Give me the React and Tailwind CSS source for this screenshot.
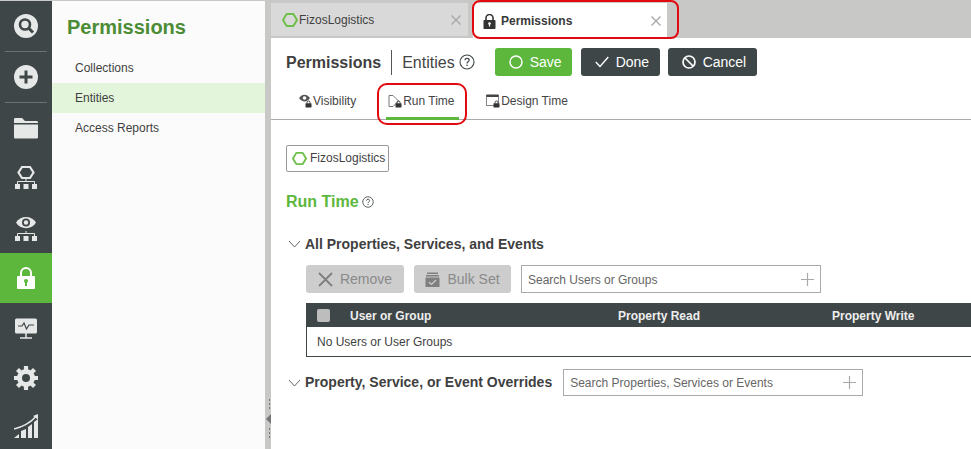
import React from 'react';

const Hex = ({ size = 16 }) => (
  <svg width={size} height={size} viewBox="0 0 16 16" fill="none" className="shrink-0">
    <path d="M4.600 2h6.800L15 8l-3.600 6H4.600L1 8z" stroke="#6cc04a" strokeWidth="2" strokeLinejoin="round" />
  </svg>
);

const Help = ({ size = 16 }) => (
  <svg width={size} height={size} viewBox="0 0 16 16" fill="none" className="shrink-0">
    <circle cx="8" cy="8" r="7" stroke="#3e4648" strokeWidth="1.100" />
    <path d="M5.900 6.200C6 5 6.900 4.300 8.100 4.300c1.200 0 2.100.7 2.100 1.800 0 1.700-2.200 1.600-2.200 3.400" stroke="#3e4648" strokeWidth="1.200" />
    <rect x="7.400" y="10.600" width="1.300" height="1.400" fill="#3e4648" />
  </svg>
);

const Chevron = () => (
  <svg width="13" height="8" viewBox="0 0 13 8" fill="none" className="shrink-0">
    <path d="M1 1l5.500 6L12 1" stroke="#555" strokeWidth="0.900" />
  </svg>
);

const Plus = () => (
  <svg width="13" height="13" viewBox="0 0 13 13" className="shrink-0">
    <path d="M6.500 0v13M0 6.500h13" stroke="#a9a9a9" strokeWidth="1.200" />
  </svg>
);

const Close = () => (
  <svg width="10" height="10" viewBox="0 0 10 10" className="shrink-0">
    <path d="M.5.500l9 9M9.500.500l-9 9" stroke="#a5a5a5" strokeWidth="1.200" />
  </svg>
);

// small padlock that sits on the sub tab icons
const TabLock = ({ x, y }) => (
  <g transform={`translate(${x} ${y})`}>
    <path d="M1.500 3V2a1.500 1.500 0 013 0v1" fill="none" stroke="#333" strokeWidth="0.900" />
    <rect x="0" y="2.800" width="6" height="4.200" rx="0.400" fill="#333" />
  </g>
);

const railIcon = '#e6e8e8';
const rail = '#3e4648';

const RailSlot = ({ active, divider, h = 'h-[50px]', extra = '', children }) => (
  <div className={`${h} ${extra} flex items-center justify-center relative shrink-0 ${active ? 'bg-[#5cb73c]' : ''}`}>
    {children}
    {divider && <div className="absolute bottom-0 left-[5px] right-[5px] h-px bg-[#6b7274]" />}
  </div>
);

const TreeBase = ({ y = 0 }) => (
  <g transform={`translate(0 ${y})`}>
    <path d="M12 15v2.500M3.500 20v-2.500h17V20" stroke={railIcon} strokeWidth="1" fill="none" />
    <rect x="1" y="20" width="5" height="5" fill={railIcon} />
    <rect x="9.500" y="20" width="5" height="5" fill={railIcon} />
    <rect x="18" y="20" width="5" height="5" fill={railIcon} />
  </g>
);

const Rail = () => (
  <div className="w-[52px] shrink-0 flex flex-col bg-[#3e4648] border-t border-[#c8c8c7]">
    <RailSlot divider h="h-[51px]" extra="pb-[1px]">
      <svg width="24" height="24" viewBox="0 0 24 24">
        <circle cx="12" cy="12" r="12" fill={railIcon} />
        <circle cx="11" cy="10.500" r="5" fill="none" stroke={rail} strokeWidth="2.600" />
        <path d="M14.500 14l4.500 4.500" stroke={rail} strokeWidth="3" />
      </svg>
    </RailSlot>
    <RailSlot divider h="h-[51px]" extra="pb-[2px]">
      <svg width="24" height="24" viewBox="0 0 24 24">
        <circle cx="12" cy="12" r="12" fill={railIcon} />
        <path d="M12 5.500v13M5.500 12h13" stroke={rail} strokeWidth="3" />
      </svg>
    </RailSlot>
    <RailSlot>
      <svg width="24" height="22" viewBox="0 0 24 22">
        <path d="M0 2.500C0 1.400.6 1 1.500 1h6.500l3 3h11.500c.9 0 1.500.5 1.500 1.500V6H0z" fill={railIcon} />
        <path d="M0 7.500h24V20c0 1-.6 1.500-1.500 1.500h-21C.6 21.500 0 21 0 20z" fill={railIcon} />
      </svg>
    </RailSlot>
    <RailSlot>
      <svg width="24" height="26" viewBox="0 0 24 26">
        <path d="M8 2h8l3.500 5.500L16 13H8L4.500 7.500z" fill="none" stroke={railIcon} strokeWidth="2.200" />
        <TreeBase y={-1} />
      </svg>
    </RailSlot>
    <RailSlot>
      <svg width="24" height="26" viewBox="0 0 24 26">
        <path d="M2 7.500c4-7.500 16-7.500 20 0-4 7.500-16 7.500-20 0z" fill={railIcon} />
        <circle cx="12" cy="7.500" r="4" fill={rail} />
        <circle cx="12" cy="7.500" r="2.200" fill={railIcon} />
        <TreeBase y={1} />
      </svg>
    </RailSlot>
    <RailSlot active>
      <svg width="18" height="22" viewBox="0 0 18 22">
        <path d="M4 10V6a5 5 0 0110 0v4" fill="none" stroke="#fff" strokeWidth="2" />
        <rect x="0" y="9" width="18" height="13" rx="1" fill="#fff" />
        <circle cx="9" cy="14" r="2" fill="#5cb73c" />
        <rect x="8" y="14" width="2" height="5" fill="#5cb73c" />
      </svg>
    </RailSlot>
    <RailSlot>
      <svg width="22" height="22" viewBox="0 0 22 22">
        <rect x="0" y="1.500" width="22" height="15" rx="1.500" fill={railIcon} />
        <path d="M3 9h4l2-3 2.500 6L14 8h5" fill="none" stroke={rail} strokeWidth="1.200" />
        <path d="M11 16v4.500M5 21h12" stroke={railIcon} strokeWidth="1.500" />
      </svg>
    </RailSlot>
    <RailSlot>
      <svg width="24" height="24" viewBox="0 0 24 24">
        <circle cx="12" cy="12" r="6.500" fill="none" stroke={railIcon} strokeWidth="5" />
        <g stroke={railIcon} strokeWidth="4.200">
          <path d="M12 0v4M12 20v4M0 12h4M20 12h4M3.500 3.500l2.800 2.800M17.700 17.700l2.800 2.800M20.500 3.500l-2.800 2.800M6.300 17.700l-2.800 2.800" />
        </g>
      </svg>
    </RailSlot>
    <RailSlot h="flex-1">
      <svg width="24" height="24" viewBox="0 0 24 24">
        <path d="M0 15C8 13 15 10 21.500 3" fill="none" stroke={railIcon} strokeWidth="1.500" />
        <path d="M19 2l5-2v5.500z" fill={railIcon} />
        <path d="M0 24l5-4v4zM7 24v-7l5-2v9zM14 24V13l4-3v14zM20 24V8l4-3v19z" fill={railIcon} />
      </svg>
    </RailSlot>
  </div>
);

const NavPanel = () => (
  <div className="w-[213px] shrink-0 bg-[#fbfbfb] border-t border-[#c8c8c7]">
    <h1 className="h-[52px] pl-[15px] pt-[13px] text-[20px] leading-[26px] font-bold text-[#4c8c35]">Permissions</h1>
    {['Collections', 'Entities', 'Access Reports'].map((item) => (
      <div
        key={item}
        className={`h-[30px] pl-[23px] flex items-center text-[12px] text-[#3f3f3f] ${item === 'Entities' ? 'bg-[#e3f6dc]' : ''}`}
      >
        {item}
      </div>
    ))}
  </div>
);

const Splitter = () => (
  <div className="w-[6px] shrink-0 bg-[#c8c8c7] flex flex-col justify-end items-end pb-[9px] gap-[3px]">
    <div className="w-[3px] h-[13px] bg-[radial-gradient(circle,#777_1px,transparent_1px)] bg-[length:3px_4px]" />
    <div className="w-0 h-0 border-y-[5px] border-y-transparent border-r-[5px] border-r-[#777]" />
    <div className="w-[3px] h-[13px] bg-[radial-gradient(circle,#777_1px,transparent_1px)] bg-[length:3px_4px]" />
  </div>
);

const TabBar = () => (
  <div className="h-[38px] bg-[#c8c8c7] flex items-end gap-[5px] relative shrink-0">
    <div className="w-[197px] h-[33px] mb-[2px] bg-[#d9d9d9] flex items-center pl-[11px] pr-[7px] text-[12px] text-[#3f3f3f]">
      <Hex />
      <span className="ml-[1px] flex-1">FizosLogistics</span>
      <Close />
    </div>
    <div className="w-[194px] h-[35px] pt-px bg-white flex items-center pl-[10px] pr-[6px] text-[12px] font-bold text-[#3a3a3a]">
      <svg width="13" height="15" viewBox="0 0 13 15" className="shrink-0">
        <path d="M3 7V4a3.500 3.500 0 017 0v3" fill="none" stroke="#333" strokeWidth="1.600" />
        <rect x="0.500" y="6" width="12" height="9" rx="0.800" fill="#333" />
        <circle cx="6.500" cy="9.500" r="1.300" fill="#fff" />
        <rect x="5.900" y="9.500" width="1.200" height="3" fill="#fff" />
      </svg>
      <span className="ml-[5px] flex-1">Permissions</span>
      <Close />
    </div>
    <div className="absolute left-[201px] top-0 w-[207px] h-[39px] rounded-[8px] border-2 border-[#e2090f]" />
  </div>
);

const Button = ({ color, icon, label, width }) => (
  <button className={`${width} ${color} h-[28px] pl-[14px] rounded-[3px] flex items-center gap-[7px] text-[14px] text-white shrink-0`}>
    {icon}
    {label}
  </button>
);

const Header = () => (
  <div className="h-[38px] mt-[10px] pl-[15px] flex items-start shrink-0">
    <div className="h-[28px] pt-px flex items-center text-[16px] font-bold text-[#3f3f3f]">Permissions</div>
    <div className="w-px h-[25px] bg-[#555] ml-[10px] mt-[2px]" />
    <div className="h-[28px] pt-px ml-[10px] flex items-center text-[16px] text-[#444]">Entities</div>
    <div className="h-[28px] ml-[4px] flex items-center"><Help /></div>
    <div className="ml-[20px] flex gap-[9px]">
      <Button
        width="w-[77px]"
        color="bg-[#5cb73c]"
        label="Save"
        icon={<svg width="14" height="14" viewBox="0 0 14 14" fill="none"><circle cx="7" cy="7" r="6" stroke="#fff" strokeWidth="1.500" /></svg>}
      />
      <Button
        width="w-[79px]"
        color="bg-[#3e4648]"
        label="Done"
        icon={<svg width="14" height="12" viewBox="0 0 14 12" fill="none"><path d="M.8 6l4.200 4.500L13.300 1" stroke="#fff" strokeWidth="1.400" /></svg>}
      />
      <div className="-ml-px">
        <Button
          width="w-[89px]"
          color="bg-[#3e4648]"
          label="Cancel"
          icon={<svg width="14" height="14" viewBox="0 0 14 14" fill="none"><circle cx="7" cy="7" r="6" stroke="#fff" strokeWidth="1.700" /><path d="M3 3l8 8" stroke="#fff" strokeWidth="1.700" /></svg>}
        />
      </div>
    </div>
  </div>
);

const SubTabs = () => (
  <div className="h-[33px] border-b border-[#aaa] flex relative shrink-0 text-[12px] text-[#444] box-content">
    <div className="ml-[28px] h-[29px] flex items-center gap-px">
      <svg width="13" height="14" viewBox="0 0 13 14">
        <path d="M0 4c3-4.500 8-4.500 11 0-3 4.500-8 4.500-11 0z" fill="#555" />
        <circle cx="5.500" cy="4" r="1.800" fill="#fff" />
        <TabLock x={6.500} y={6.500} />
      </svg>
      Visibility
    </div>
    <div className="ml-[30px] w-[73px] h-[34px] pl-[2px] border-b-[3px] border-[#5cb73c]">
      <div className="h-[29px] flex items-center gap-px">
        <svg width="14" height="14" viewBox="0 0 14 14" fill="none">
          <path d="M1 1.500h4l5.500 5.500-5.500 5.500H1z" stroke="#666" strokeWidth="0.900" />
          <TabLock x={7.500} y={6.500} />
        </svg>
        Run Time
      </div>
    </div>
    <div className="ml-[27px] h-[29px] flex items-center gap-px">
      <svg width="14" height="14" viewBox="0 0 14 14" fill="none">
        <rect x="0.500" y="1.500" width="12" height="10" stroke="#666" strokeWidth="0.800" />
        <rect x="0.500" y="0.500" width="12" height="2.500" fill="#444" />
        <TabLock x={7.500} y={6.500} />
      </svg>
      Design Time
    </div>
    <div className="absolute left-[106px] top-[-3px] w-[90px] h-[42px] rounded-[10px] border-2 border-[#e2090f]" />
  </div>
);

const SearchBox = ({ width, h = 'h-[28px]', nudge = '', placeholder }) => (
  <div className={`${width} ${h} ${nudge} border border-[#aaa] bg-white flex items-center pl-[6px] pr-[6px] text-[12px] text-[#666] shrink-0`}>
    <span className="flex-1">{placeholder}</span>
    <Plus />
  </div>
);

const GrayButton = ({ width, icon, label }) => (
  <div className={`${width} h-[28px] rounded-[3px] bg-[#cdcdcd] flex items-center justify-center gap-[7px] text-[14px] text-[#8a8a8a] shrink-0`}>
    {icon}
    {label}
  </div>
);

const Content = () => (
  <div className="pl-[15px] flex flex-col">
    <div className="mt-[25px] w-[103px] h-[27px] pb-px border border-[#999] rounded-[2px] flex items-center pl-[5px] gap-[3px] text-[12px] text-[#3f3f3f]">
      <Hex size={15} />
      FizosLogistics
    </div>
    <div className="mt-[20px] h-[20px] flex items-center gap-[3px]">
      <span className="text-[16px] font-bold text-[#5cb73c]">Run Time</span>
      <Help size={12} />
    </div>
    <div className="mt-[22px] h-[20px] flex items-center text-[14px] font-bold text-[#3f3f3f]">
      <div className="ml-[2px] mr-[4px]"><Chevron /></div>
      All Properties, Services, and Events
    </div>
    <div className="ml-[20px] mt-[11px] flex gap-[10px]">
      <GrayButton
        width="w-[98px]"
        label="Remove"
        icon={<svg width="15" height="15" viewBox="0 0 15 15"><path d="M1 1l13 13M14 1L1 14" stroke="#7f7f7f" strokeWidth="1.800" /></svg>}
      />
      <GrayButton
        width="w-[97px]"
        label="Bulk Set"
        icon={
          <svg width="15" height="15" viewBox="0 0 15 15">
            <rect x="2" y="0.500" width="11" height="1.500" fill="#7f7f7f" />
            <rect x="1" y="3" width="13" height="1.500" fill="#7f7f7f" />
            <rect x="0.500" y="5.500" width="14" height="9.500" fill="#7f7f7f" />
            <path d="M4 10l2.500 2.500L11 8" fill="none" stroke="#cdcdcd" strokeWidth="1.200" />
          </svg>
        }
      />
      <SearchBox width="w-[300px]" nudge="pt-px" placeholder="Search Users or Groups" />
    </div>
    <div className="ml-[20px] mt-[10px] w-[800px] border-b border-[#3e4648]">
      <div className="h-[24px] pt-px bg-[#3e4648] flex items-center text-[12px] font-bold text-[#eee]">
        <div className="ml-[11px] w-[13px] h-[13px] rounded-[2px] bg-[#bdbdbd]" />
        <span className="ml-[20px] w-[268px]">User or Group</span>
        <span className="w-[214px]">Property Read</span>
        <span>Property Write</span>
      </div>
      <div className="h-[29px] pl-[10px] flex items-center border-l border-[#3e4648] text-[12px] text-[#3f3f3f]">
        No Users or User Groups
      </div>
    </div>
    <div className="mt-[12px] h-[27px] flex items-center text-[14px] font-bold text-[#3f3f3f]">
      <div className="ml-[2px] mr-[4px]"><Chevron /></div>
      Property, Service, or Event Overrides
      <div className="ml-[11px] font-normal"><SearchBox width="w-[300px]" h="h-[27px]" placeholder="Search Properties, Services or Events" /></div>
    </div>
  </div>
);

export default function App() {
  return (
    <div className="w-[971px] h-[449px] overflow-hidden flex bg-white font-['Liberation_Sans',Arial,sans-serif]">
      <Rail />
      <NavPanel />
      <Splitter />
      <div className="flex-1 min-w-0 flex flex-col overflow-hidden">
        <TabBar />
        <Header />
        <SubTabs />
        <Content />
      </div>
    </div>
  );
}
